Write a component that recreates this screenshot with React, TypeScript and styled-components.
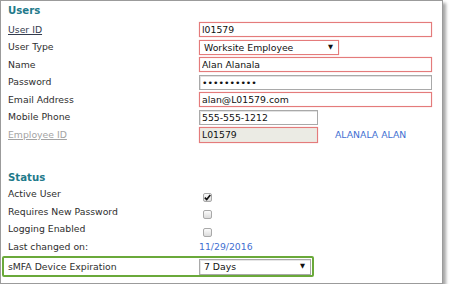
import React from "react";
import styled, { createGlobalStyle } from "styled-components";

const Global = createGlobalStyle`
  html, body { margin: 0; padding: 0; background: #ffffff; }
  body { font-family: "DejaVu Sans", Verdana, sans-serif; font-size: 9.3px; color: #333333; }
  * { box-sizing: border-box; }
`;

const Panel = styled.div`
  width: 443px;
  height: 284px;
  border: 1px solid #9b9b9b;
  box-shadow: 3px 3px 3px rgba(0, 0, 0, 0.35);
  padding-left: 7px;
  display: flex;
  flex-direction: column;
  background: #ffffff;
`;

const Heading = styled.div<{ $h: number; $top?: number }>`
  height: ${(p) => p.$h}px;
  margin-top: ${(p) => p.$top ?? 0}px;
  line-height: ${(p) => p.$h}px;
  font-weight: bold;
  font-size: 10.2px;
  color: #1f7a8b;
`;

const Row = styled.div`
  display: grid;
  grid-template-columns: 191px auto;
  align-items: center;
  height: 17.5px;
`;

const Label = styled.span<{ $link?: boolean; $muted?: boolean }>`
  color: ${(p) => (p.$muted ? "#a3a3a3" : p.$link ? "#343c4e" : "#2e2e2e")};
  text-decoration: ${(p) => (p.$link || p.$muted ? "underline" : "none")};
  white-space: nowrap;
  line-height: 12px;
`;

const Field = styled.input<{ $w: number; $error?: boolean; $disabled?: boolean; $h?: number }>`
  width: ${(p) => p.$w}px;
  height: ${(p) => p.$h ?? 15}px;
  margin: 0;
  padding: 0 2px;
  font-family: "DejaVu Sans", Verdana, sans-serif;
  font-size: 9.3px;
  color: #111111;
  border: 1px solid ${(p) => (p.$error ? "#e47b7b" : "#a9a9a9")};
  box-shadow: ${(p) =>
    p.$error ? "0 0 1px #f2a9a9, inset 0 0 1px #f2b3b3" : "inset 1px 1px 0 #e2e2e2"};
  background: ${(p) => (p.$disabled ? "#ebebe4" : "#ffffff")};
  outline: none;
  border-radius: 0;
`;

const Select = styled.div<{ $w: number; $error?: boolean; $h?: number }>`
  width: ${(p) => p.$w}px;
  height: ${(p) => p.$h ?? 15}px;
  display: flex;
  align-items: center;
  justify-content: space-between;
  padding: 0 5px 0 4px;
  color: #111111;
  border: 1px solid ${(p) => (p.$error ? "#e47b7b" : "#a9a9a9")};
  box-shadow: ${(p) => (p.$error ? "0 0 1px #f2a9a9" : "inset 1px 1px 0 #e6e6e6")};
  background: #ffffff;
`;

const Arrow = styled.span`
  font-size: 6.5px;
  color: #111111;
  line-height: 1;
`;

const ValueGroup = styled.div`
  display: flex;
  align-items: center;
  gap: 17px;
`;

const BlueText = styled.span`
  color: #3f6fd2;
  white-space: nowrap;
  line-height: 12px;
`;

const Spacer = styled.div<{ $h: number }>`
  height: ${(p) => p.$h}px;
`;

const Box = styled.span`
  width: 9px;
  height: 9px;
  margin-left: 4px;
  margin-top: 6px;
  border: 1px solid #a9a9a9;
  border-radius: 2px;
  background: linear-gradient(#fbfbfb, #dcdcdc);
  display: flex;
  align-items: center;
  justify-content: center;
`;

const Highlight = styled.div`
  display: grid;
  grid-template-columns: 191px 112px;
  align-items: center;
  width: 312px;
  height: 21px;
  margin-left: -6px;
  padding: 1px 1px 0 4px;
  border: 2px solid #6aa93a;
  border-radius: 2px;
`;

const Check = () => (
  <svg width="7" height="7" viewBox="0 0 7 7">
    <path d="M0.8 3.6 L2.7 5.6 L6.3 1.0" fill="none" stroke="#111" strokeWidth="1.6" />
  </svg>
);

export default function App() {
  return (
    <>
      <Global />
      <Panel>
        <Heading $h={20}>Users</Heading>
        <Row>
          <Label $link>User ID</Label>
          <Field $w={233} $error readOnly value="l01579" />
        </Row>
        <Row>
          <Label>User Type</Label>
          <Select $w={140} $error>
            <span>Worksite Employee</span>
            <Arrow>▼</Arrow>
          </Select>
        </Row>
        <Row>
          <Label>Name</Label>
          <Field $w={233} $error readOnly value="Alan Alanala" />
        </Row>
        <Row>
          <Label>Password</Label>
          <Field $w={233} type="password" readOnly value="abcdefghij" />
        </Row>
        <Row>
          <Label>Email Address</Label>
          <Field $w={233} $error readOnly value="alan@L01579.com" />
        </Row>
        <Row>
          <Label>Mobile Phone</Label>
          <Field $w={119} readOnly value="555-555-1212" />
        </Row>
        <Row>
          <Label $muted>Employee ID</Label>
          <ValueGroup>
            <Field $w={119} $h={16} $error $disabled readOnly value="L01579" />
            <BlueText>ALANALA ALAN</BlueText>
          </ValueGroup>
        </Row>
        <Spacer $h={25} />
        <Heading $h={17}>Status</Heading>
        <Row>
          <Label>Active User</Label>
          <Box>
            <Check />
          </Box>
        </Row>
        <Row>
          <Label>Requires New Password</Label>
          <Box />
        </Row>
        <Row>
          <Label>Logging Enabled</Label>
          <Box />
        </Row>
        <Row>
          <Label>Last changed on:</Label>
          <BlueText>11/29/2016</BlueText>
        </Row>
        <Highlight>
          <Label>sMFA Device Expiration</Label>
          <Select $w={112} $h={16}>
            <span>7 Days</span>
            <Arrow>▼</Arrow>
          </Select>
        </Highlight>
      </Panel>
    </>
  );
}
